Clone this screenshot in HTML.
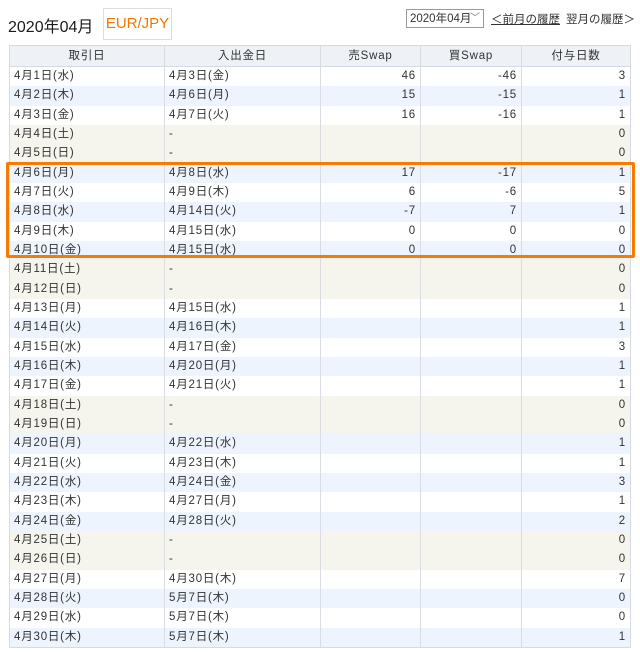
<!DOCTYPE html>
<html><head><meta charset="utf-8"><style>
body{margin:0;width:640px;height:652px;background:#fff;font-family:"Liberation Sans","Noto Sans CJK JP",sans-serif;color:#333;position:relative;overflow:hidden}
.t{position:absolute;left:8px;top:13px;font-size:16px;color:#1a1a1a}
.pair{position:absolute;left:103px;top:8px;width:67px;height:30px;border:1px solid #ddd;color:#f07800;font-size:15px;line-height:30px;text-align:center}
.sel{position:absolute;left:406px;top:9px;height:19px;border:1px solid #999;font-size:11.5px;line-height:18px;padding-left:3px;box-sizing:border-box;width:78px}
.sel span{position:absolute;right:3px;top:0;color:#777;font-size:10px}
.nav{position:absolute;top:11px;font-size:11.5px;color:#333}
.tbl{position:absolute;left:9px;top:45px;width:622px;border:1px solid #d6dbe3;box-sizing:border-box}
.r{display:flex;height:19.33px;font-size:11.5px;line-height:19.33px;letter-spacing:.8px}
.h{height:20px;line-height:20px;background:#eef1f6;border-bottom:1px solid #d6dbe3;text-align:center}
.r>div{box-sizing:border-box;border-right:1px solid #d9dde3;padding:0 4px;overflow:hidden;white-space:nowrap}
.r>div:last-child{border-right:none}
.c1{width:155px}.c2{width:156px}.c3{width:100px;text-align:right}.c4{width:101px;text-align:right}.c5{flex:1;text-align:right}
.h>div{text-align:center}
.w{background:#fff}.b{background:#edf4fd}.e{background:#f5f5ee}
.box{position:absolute;left:6px;top:162px;width:629px;height:96px;border:3px solid #f57c00;box-sizing:border-box;border-radius:2px}
</style></head><body>
<div class="t">2020年04月</div>
<div class="pair">EUR/JPY</div>
<div class="sel">2020年04月<span>﹀</span></div>
<div class="nav" style="left:491px;text-decoration:underline">＜前月の履歴</div>
<div class="nav" style="left:566px">翌月の履歴＞</div>
<div class="tbl">
<div class="r h"><div class="c1">取引日</div><div class="c2">入出金日</div><div class="c3">売Swap</div><div class="c4">買Swap</div><div class="c5">付与日数</div></div>
<div class="r w"><div class="c1">4月1日(水)</div><div class="c2">4月3日(金)</div><div class="c3">46</div><div class="c4">-46</div><div class="c5">3</div></div>
<div class="r b"><div class="c1">4月2日(木)</div><div class="c2">4月6日(月)</div><div class="c3">15</div><div class="c4">-15</div><div class="c5">1</div></div>
<div class="r w"><div class="c1">4月3日(金)</div><div class="c2">4月7日(火)</div><div class="c3">16</div><div class="c4">-16</div><div class="c5">1</div></div>
<div class="r e"><div class="c1">4月4日(土)</div><div class="c2">-</div><div class="c3"></div><div class="c4"></div><div class="c5">0</div></div>
<div class="r e"><div class="c1">4月5日(日)</div><div class="c2">-</div><div class="c3"></div><div class="c4"></div><div class="c5">0</div></div>
<div class="r b"><div class="c1">4月6日(月)</div><div class="c2">4月8日(水)</div><div class="c3">17</div><div class="c4">-17</div><div class="c5">1</div></div>
<div class="r w"><div class="c1">4月7日(火)</div><div class="c2">4月9日(木)</div><div class="c3">6</div><div class="c4">-6</div><div class="c5">5</div></div>
<div class="r b"><div class="c1">4月8日(水)</div><div class="c2">4月14日(火)</div><div class="c3">-7</div><div class="c4">7</div><div class="c5">1</div></div>
<div class="r w"><div class="c1">4月9日(木)</div><div class="c2">4月15日(水)</div><div class="c3">0</div><div class="c4">0</div><div class="c5">0</div></div>
<div class="r b"><div class="c1">4月10日(金)</div><div class="c2">4月15日(水)</div><div class="c3">0</div><div class="c4">0</div><div class="c5">0</div></div>
<div class="r e"><div class="c1">4月11日(土)</div><div class="c2">-</div><div class="c3"></div><div class="c4"></div><div class="c5">0</div></div>
<div class="r e"><div class="c1">4月12日(日)</div><div class="c2">-</div><div class="c3"></div><div class="c4"></div><div class="c5">0</div></div>
<div class="r w"><div class="c1">4月13日(月)</div><div class="c2">4月15日(水)</div><div class="c3"></div><div class="c4"></div><div class="c5">1</div></div>
<div class="r b"><div class="c1">4月14日(火)</div><div class="c2">4月16日(木)</div><div class="c3"></div><div class="c4"></div><div class="c5">1</div></div>
<div class="r w"><div class="c1">4月15日(水)</div><div class="c2">4月17日(金)</div><div class="c3"></div><div class="c4"></div><div class="c5">3</div></div>
<div class="r b"><div class="c1">4月16日(木)</div><div class="c2">4月20日(月)</div><div class="c3"></div><div class="c4"></div><div class="c5">1</div></div>
<div class="r w"><div class="c1">4月17日(金)</div><div class="c2">4月21日(火)</div><div class="c3"></div><div class="c4"></div><div class="c5">1</div></div>
<div class="r e"><div class="c1">4月18日(土)</div><div class="c2">-</div><div class="c3"></div><div class="c4"></div><div class="c5">0</div></div>
<div class="r e"><div class="c1">4月19日(日)</div><div class="c2">-</div><div class="c3"></div><div class="c4"></div><div class="c5">0</div></div>
<div class="r b"><div class="c1">4月20日(月)</div><div class="c2">4月22日(水)</div><div class="c3"></div><div class="c4"></div><div class="c5">1</div></div>
<div class="r w"><div class="c1">4月21日(火)</div><div class="c2">4月23日(木)</div><div class="c3"></div><div class="c4"></div><div class="c5">1</div></div>
<div class="r b"><div class="c1">4月22日(水)</div><div class="c2">4月24日(金)</div><div class="c3"></div><div class="c4"></div><div class="c5">3</div></div>
<div class="r w"><div class="c1">4月23日(木)</div><div class="c2">4月27日(月)</div><div class="c3"></div><div class="c4"></div><div class="c5">1</div></div>
<div class="r b"><div class="c1">4月24日(金)</div><div class="c2">4月28日(火)</div><div class="c3"></div><div class="c4"></div><div class="c5">2</div></div>
<div class="r e"><div class="c1">4月25日(土)</div><div class="c2">-</div><div class="c3"></div><div class="c4"></div><div class="c5">0</div></div>
<div class="r e"><div class="c1">4月26日(日)</div><div class="c2">-</div><div class="c3"></div><div class="c4"></div><div class="c5">0</div></div>
<div class="r w"><div class="c1">4月27日(月)</div><div class="c2">4月30日(木)</div><div class="c3"></div><div class="c4"></div><div class="c5">7</div></div>
<div class="r b"><div class="c1">4月28日(火)</div><div class="c2">5月7日(木)</div><div class="c3"></div><div class="c4"></div><div class="c5">0</div></div>
<div class="r w"><div class="c1">4月29日(水)</div><div class="c2">5月7日(木)</div><div class="c3"></div><div class="c4"></div><div class="c5">0</div></div>
<div class="r b"><div class="c1">4月30日(木)</div><div class="c2">5月7日(木)</div><div class="c3"></div><div class="c4"></div><div class="c5">1</div></div>
</div>
<div class="box"></div>
</body></html>
